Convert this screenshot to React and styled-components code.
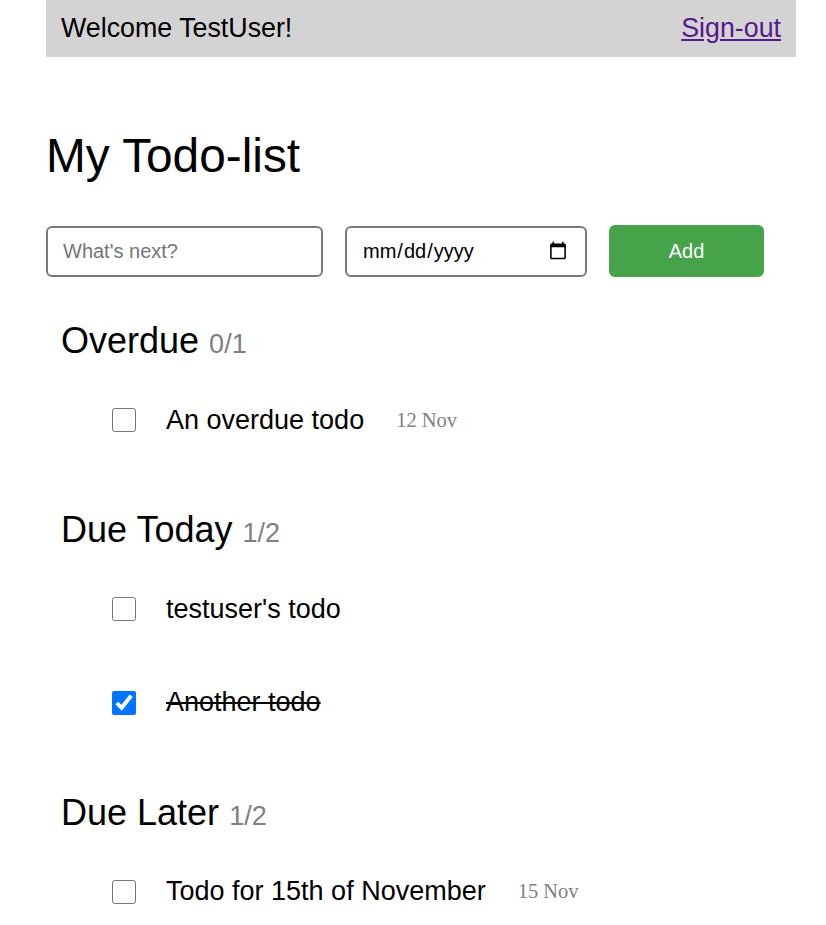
import React from 'react';
import styled, { createGlobalStyle } from 'styled-components';

const GlobalStyle = createGlobalStyle`
	body {
		margin: 0;
		background: #ffffff;
		font-family: "Liberation Sans", Arial, sans-serif;
		color: #000000;
	}
`;

const sections = [
	{
		title: 'Overdue',
		todos: [{ text: 'An overdue todo', date: '12 Nov', done: false }],
	},
	{
		title: 'Due Today',
		todos: [
			{ text: "testuser's todo", done: false },
			{ text: 'Another todo', done: true },
		],
	},
	{
		title: 'Due Later',
		todos: [
			{ text: 'Todo for 15th of November', date: '15 Nov', done: false },
			{ text: 'Todo for 20th of November', date: '20 Nov', done: true },
		],
	},
];

const TodoItem = ({ todo }) => (
	<Item>
		<Check type="checkbox" defaultChecked={todo.done} />
		<ItemText done={todo.done}>{todo.text}</ItemText>
		{todo.date && <DueDate>{todo.date}</DueDate>}
	</Item>
);

const App = () => {
	return (
		<Page>
			<GlobalStyle />
			<Header>
				<span>Welcome TestUser!</span>
				<SignOut href="#">Sign-out</SignOut>
			</Header>
			<Heading>My Todo-list</Heading>
			<AddForm onSubmit={(e) => e.preventDefault()}>
				<TextInput type="text" placeholder="What's next?" />
				<DateInput type="date" />
				<AddBtn type="submit">Add</AddBtn>
			</AddForm>
			{sections.map((section) => (
				<Section key={section.title}>
					<SectionTitle>
						{section.title} <Count>{section.todos.filter((t) => t.done).length}/{section.todos.length}</Count>
					</SectionTitle>
					<List>
						{section.todos.map((todo) => (
							<TodoItem key={todo.text} todo={todo} />
						))}
					</List>
				</Section>
			))}
		</Page>
	);
};

export default App;

const Page = styled.div`
	width: 750px;
	padding-left: 46px;
`;

const Header = styled.header`
	display: flex;
	justify-content: space-between;
	align-items: center;
	height: 57px;
	padding: 0 15px;
	background: #d3d3d3;
	font-size: 26.8px;
`;

const SignOut = styled.a`
	color: #551a8b;
	text-decoration: underline;
`;

const Heading = styled.h1`
	font-size: 47.8px;
	font-weight: 400;
	margin: 71px 0 42px;
`;

const AddForm = styled.form`
	display: flex;
	align-items: center;
	gap: 22px;
`;

const Field = styled.input`
	box-sizing: border-box;
	height: 51px;
	padding: 0 15px;
	border: 2px solid #7a7a7a;
	border-radius: 6px;
	font-family: "Liberation Sans", Arial, sans-serif;
	font-size: 20px;
	color: #000000;
	background: #ffffff;

	&::placeholder {
		color: #757575;
	}
`;

const TextInput = styled(Field)`
	width: 277px;
`;

const DateInput = styled(Field)`
	width: 242px;
`;

const AddBtn = styled.button`
	width: 155px;
	height: 52px;
	border: none;
	border-radius: 6px;
	background: #46a34a;
	color: #ffffff;
	font-family: "Liberation Sans", Arial, sans-serif;
	font-size: 20px;
	cursor: pointer;
`;

const Section = styled.section`
	padding-left: 15px;
	margin-top: 43px;

	& + & {
		margin-top: 42px;
	}
`;

const SectionTitle = styled.h2`
	font-size: 36px;
	font-weight: 400;
	margin: 0 0 11.5px;
`;

const Count = styled.span`
	font-size: 27px;
	color: #808080;
`;

const List = styled.ul`
	list-style: none;
	margin: 0;
	padding: 0 0 0 51px;
`;

const Item = styled.li`
	display: flex;
	align-items: center;
	height: 93.5px;
`;

const Check = styled.input`
	width: 24px;
	height: 24px;
	margin: 0;
`;

const ItemText = styled.span`
	margin-left: 30px;
	font-size: 27px;
	text-decoration: ${(p) => (p.done ? 'line-through' : 'none')};
`;

const DueDate = styled.span`
	margin-left: 32px;
	font-family: "Liberation Serif", "Times New Roman", serif;
	font-size: 20.5px;
	color: #808080;
`;
